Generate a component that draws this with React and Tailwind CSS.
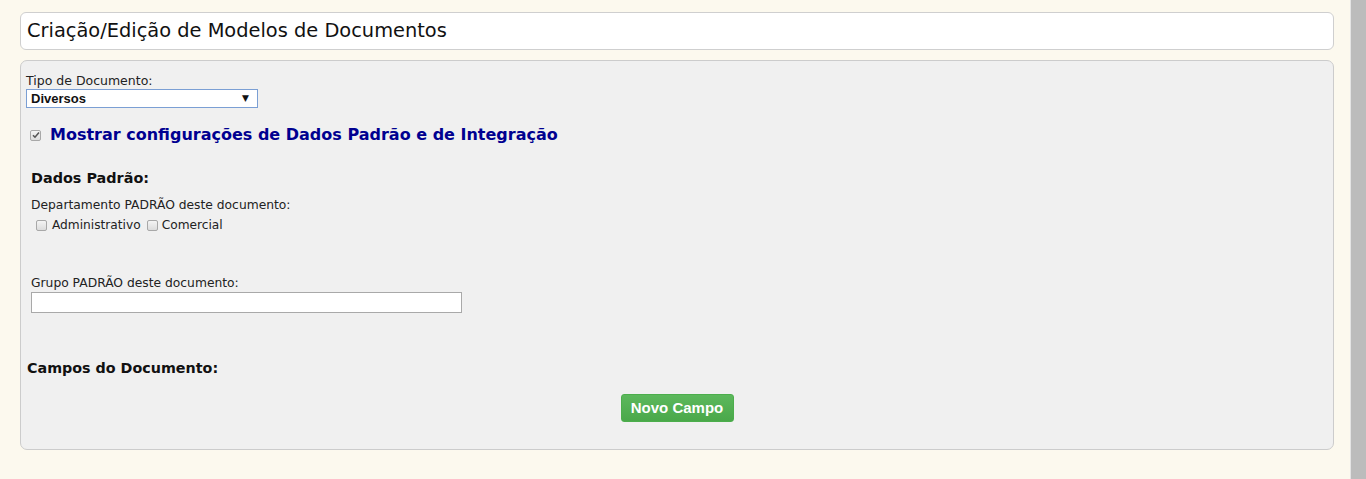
import { useState } from "react";

const tahoma = { fontFamily: '"DejaVu Sans", Verdana, sans-serif' };
const arial = { fontFamily: '"Liberation Sans", Arial, sans-serif' };

// little gray checkbox like the old windows look
const Check = ({ checked, onChange }) => (
    <span
        onClick={onChange}
        className="inline-flex shrink-0 items-center justify-center w-[11px] h-[11px] border border-[#a8a8a8] rounded-[2px] bg-gradient-to-b from-[#f4f4f4] to-[#dcdcdc] cursor-pointer"
    >
        {checked && (
            <svg width="8" height="8" viewBox="0 0 8 8">
                <path d="M1 4.2 L3 6.2 L7 1.6" stroke="#555" strokeWidth="1.6" fill="none" />
            </svg>
        )}
    </span>
);

const App = () => {
    const [showConfig, setShowConfig] = useState(true);
    const [depts, setDepts] = useState({ adm: false, com: false });
    const [grupo, setGrupo] = useState("");
    const [tipo, setTipo] = useState("Diversos");

    return (
        <div className="flex w-full h-[479px] bg-[#fcf9ee] overflow-hidden">
            <div className="flex-1 pl-5 pr-4 pt-3" style={tahoma}>
                {/* titulo */}
                <div className="h-[38px] bg-white border border-[#cfcfcf] rounded-[6px] flex items-center px-[6px]">
                    <h1 className="text-[19.4px] leading-[24px] text-[#111] font-normal">Criação/Edição de Modelos de Documentos</h1>
                </div>

                {/* painel principal */}
                <div className="mt-[10px] h-[390px] bg-[#f0f0f0] border border-[#cccccc] rounded-[7px] px-[5px] pt-[12px]">
                    <label className="block text-[12.5px] text-[#222] leading-[16px]">Tipo de Documento:</label>
                    <div className="relative w-[232px] h-[19px] border border-[#7b9fd4] bg-white flex items-center pl-[4px]">
                        <span className="text-[13px] font-bold text-[#111] leading-[17px]" style={arial}>{tipo}</span>
                        <span className="ml-auto mr-[8px] text-[9px] text-[#111] leading-none">▼</span>
                        <select
                            value={tipo}
                            onChange={(e) => setTipo(e.target.value)}
                            className="absolute inset-0 opacity-0 cursor-pointer"
                        >
                            <option>Diversos</option>
                            <option>Contratos</option>
                        </select>
                    </div>

                    <div className="flex items-center mt-[17px] pl-[4px] gap-[9px] leading-[20px]">
                        <Check checked={showConfig} onChange={() => setShowConfig(!showConfig)} />
                        <span className="text-[16px] font-bold text-[#000090]">Mostrar configurações de Dados Padrão e de Integração</span>
                    </div>

                    {showConfig && (
                        <div className="pl-[5px]">
                            <h3 className="mt-[24px] text-[14.4px] leading-[18px] font-bold text-[#111]">Dados Padrão:</h3>
                            <p className="mt-[10px] text-[12.3px] text-[#222] leading-[16px]">Departamento PADRÃO deste documento:</p>
                            <div className="flex items-center text-[12.2px] text-[#222] mt-[4px] pl-[5px] leading-[16px]">
                                <Check checked={depts.adm} onChange={() => setDepts({ ...depts, adm: !depts.adm })} />
                                <span className="ml-[5px] mr-[6px]">Administrativo</span>
                                <Check checked={depts.com} onChange={() => setDepts({ ...depts, com: !depts.com })} />
                                <span className="ml-[4px]">Comercial</span>
                            </div>

                            <p className="mt-[42px] text-[12.3px] text-[#222] leading-[16px]">Grupo PADRÃO deste documento:</p>
                            <input
                                value={grupo}
                                onChange={(e) => setGrupo(e.target.value)}
                                className="block mt-[1px] w-[431px] h-[21px] border border-[#a9a9a9] bg-white outline-none px-1 text-[13px]"
                            />
                        </div>
                    )}

                    <h3 className="mt-[46px] pl-[1px] text-[14.3px] leading-[18px] font-bold text-[#111]">Campos do Documento:</h3>
                    <div className="flex justify-center mt-[17px]">
                        <button
                            className="w-[113px] h-[28px] rounded-[3px] border border-[#4cae4c] bg-gradient-to-b from-[#5cb85c] to-[#4aa84a] text-white font-bold text-[15px]"
                            style={arial}
                        >
                            Novo Campo
                        </button>
                    </div>
                </div>
            </div>
            {/* barra lateral cinza */}
            <div className="w-[16px] h-full bg-[#bcbcbc] border-l border-[#e4e4e4]"></div>
        </div>
    );
};

export default App;
